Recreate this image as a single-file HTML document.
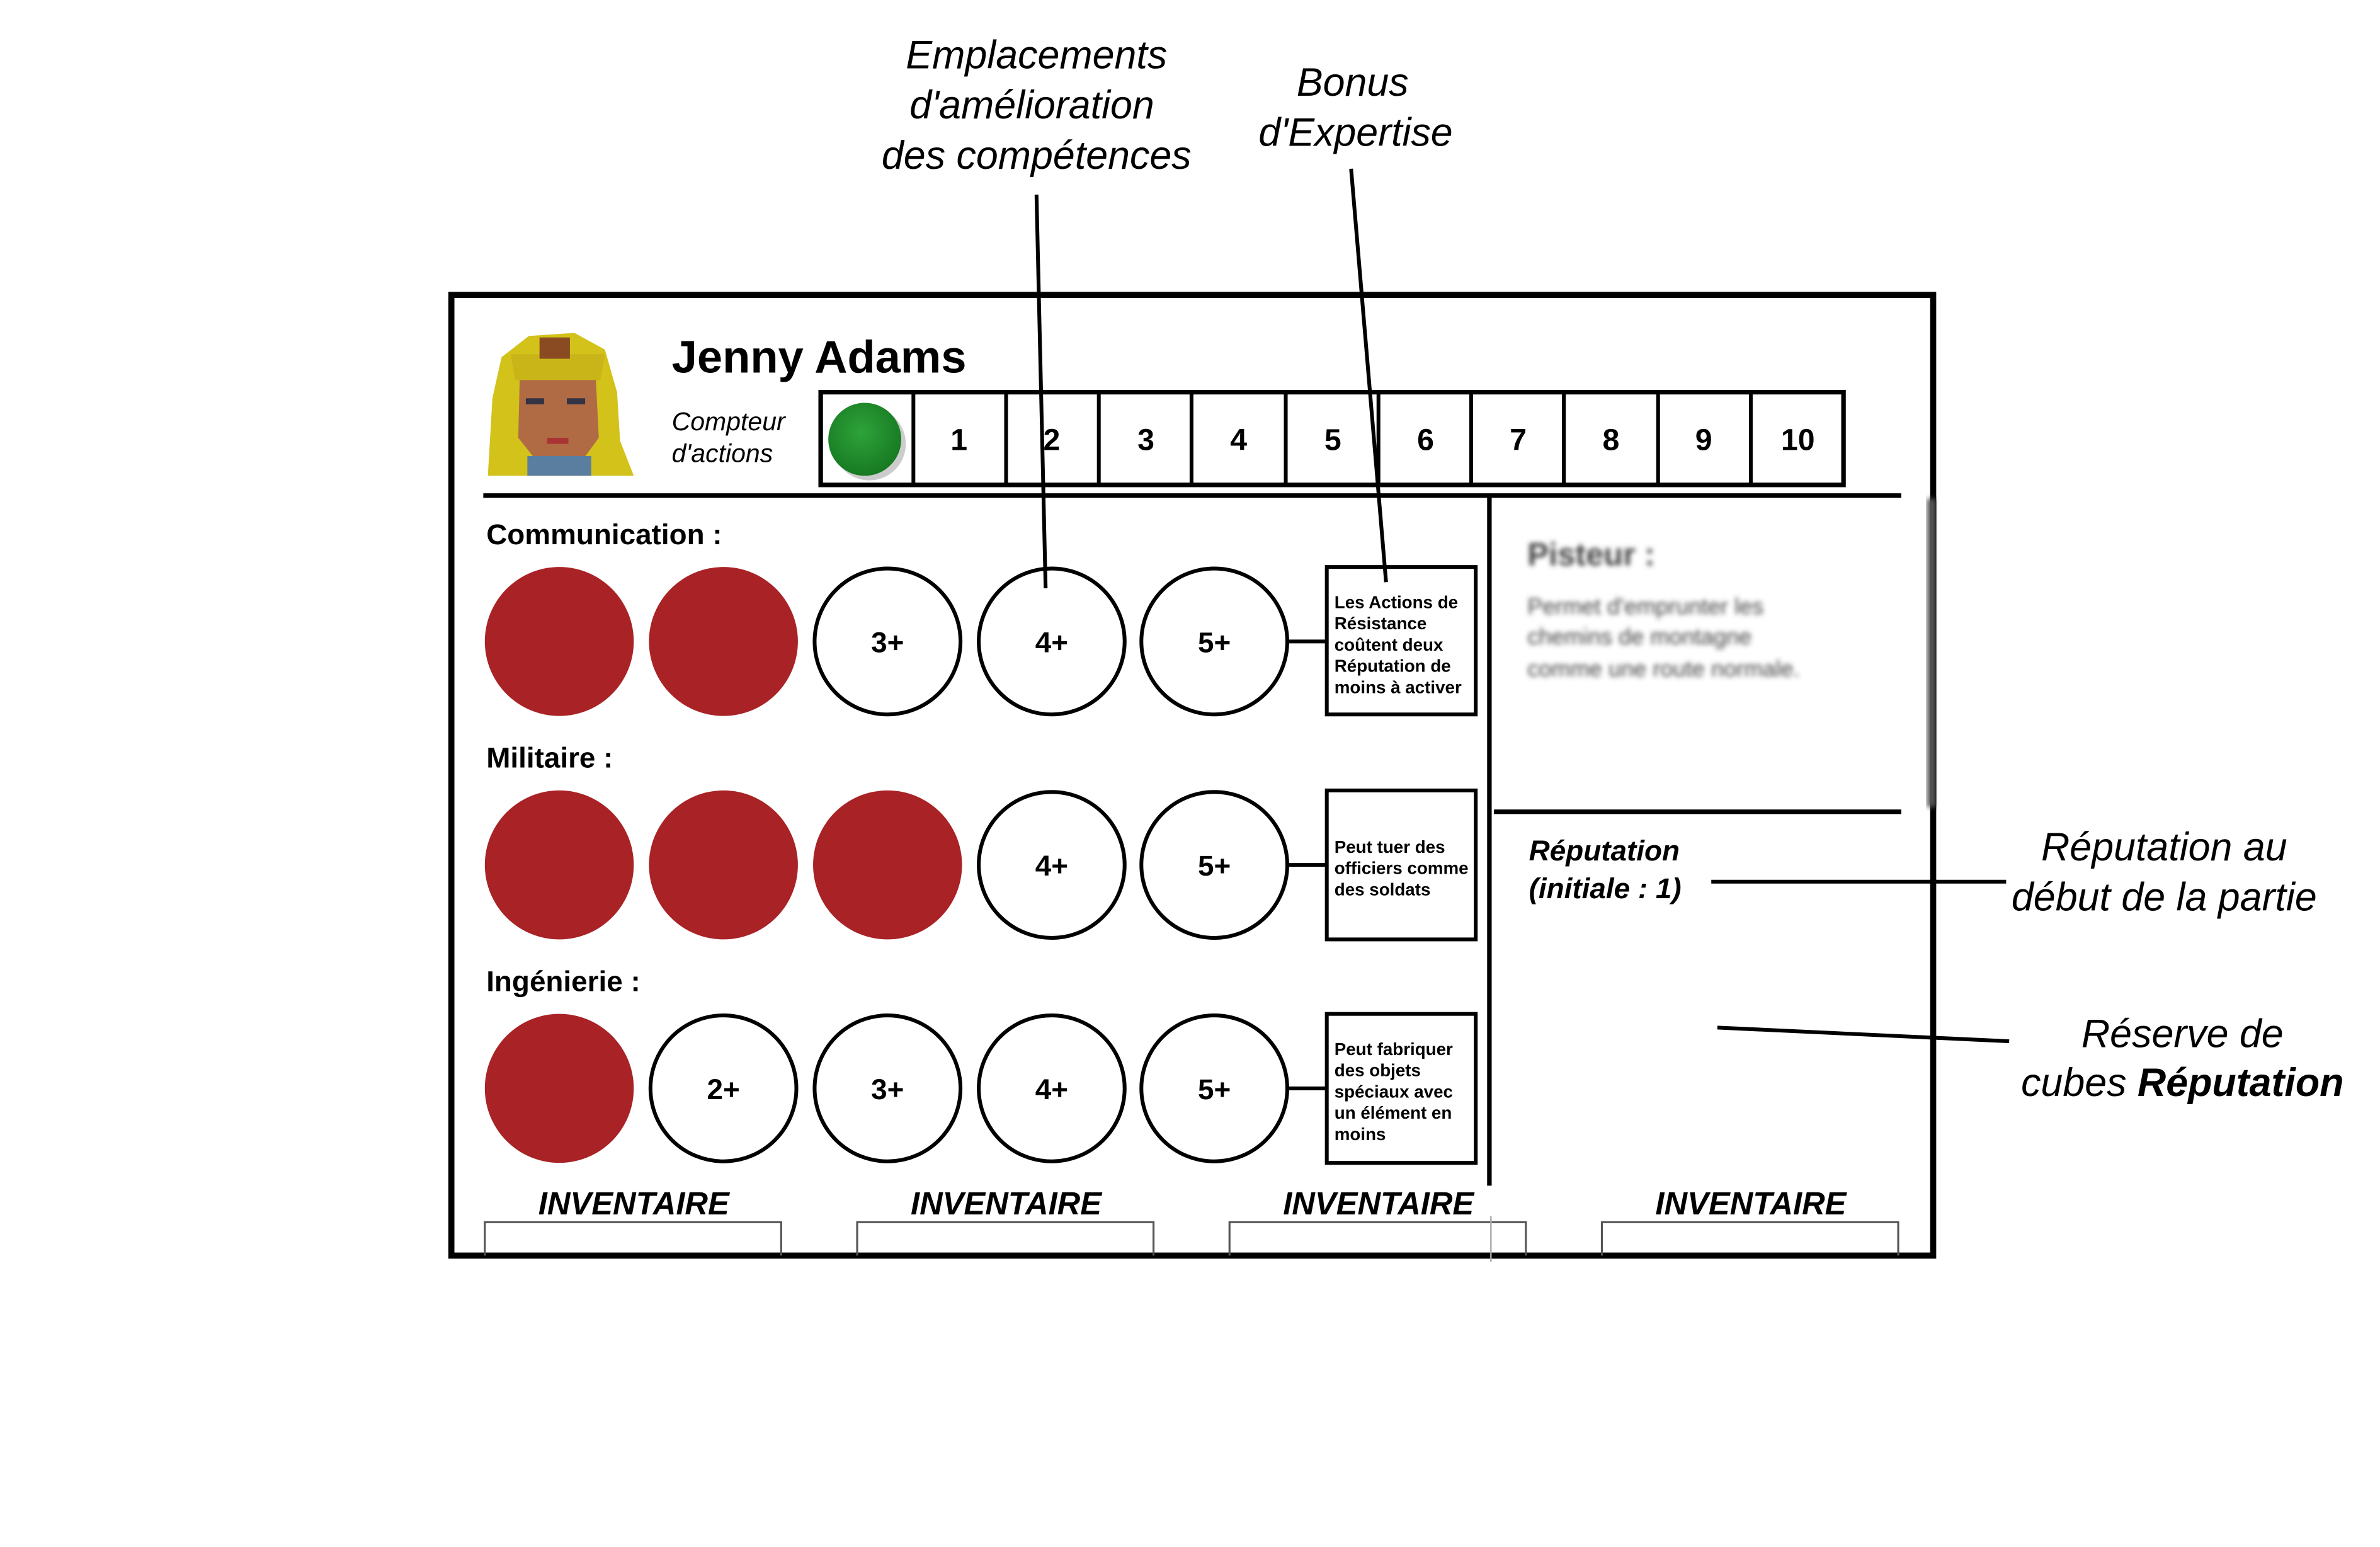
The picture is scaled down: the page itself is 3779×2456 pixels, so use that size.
<!DOCTYPE html>
<html><head><meta charset="utf-8"><style>
html,body{margin:0;padding:0;background:#fff;width:3779px;height:2456px;overflow:hidden}
svg{display:block}
text{font-family:"Liberation Sans",sans-serif}
</style></head><body>
<svg width="3779" height="2456" viewBox="0 0 1566 1017.7" preserveAspectRatio="none" xmlns="http://www.w3.org/2000/svg">
<defs>
<filter id="bl" x="-10%" y="-10%" width="120%" height="120%"><feGaussianBlur stdDeviation="1.6"/></filter>
<radialGradient id="gr" cx="45%" cy="40%" r="60%"><stop offset="0" stop-color="#2ea33a"/><stop offset="1" stop-color="#177a22"/></radialGradient>
</defs>
<rect width="1566" height="1018" fill="#fff"/>
<g font-style="italic" font-size="26" text-anchor="middle" fill="#000">
<text x="682" y="45">Emplacements</text>
<text x="679" y="78">d'amélioration</text>
<text x="682" y="111">des compétences</text>
<text x="890" y="63">Bonus</text>
<text x="892" y="96">d'Expertise</text>
<text x="1424" y="566">Réputation au</text>
<text x="1424" y="599">début de la partie</text>
<text x="1436" y="689">Réserve de</text>
<text x="1436" y="721">cubes <tspan font-weight="bold">Réputation</tspan></text>
</g>
<rect x="297" y="194" width="975" height="632" fill="none" stroke="#000" stroke-width="4"/>
<g>
<path d="M321 313 L324 262 L330 235 L348 221 L378 219 L398 230 L406 258 L408 290 L417 313 Z" fill="#d2c21a"/>
<path d="M342 248 L392 248 L394 288 L383 303 L353 303 L341 288 Z" fill="#b06b45"/>
<rect x="346" y="262" width="12" height="4" fill="#334"/><rect x="373" y="262" width="12" height="4" fill="#334"/>
<rect x="360" y="288" width="14" height="4" fill="#a33"/>
<path d="M336 233 L398 233 L395 250 L339 250 Z" fill="#c9b518"/>
<rect x="347" y="300" width="42" height="13" fill="#5a7ea0"/>
<rect x="355" y="222" width="20" height="14" fill="#8a4a22"/>
</g>
<text x="442" y="245" font-size="30" font-weight="bold">Jenny Adams</text>
<text x="442" y="283" font-size="17" font-style="italic">Compteur</text>
<text x="442" y="304" font-size="17" font-style="italic">d'actions</text>
<rect x="540" y="258" width="673" height="61" fill="none" stroke="#000" stroke-width="3"/>
<g stroke="#000" stroke-width="2.5">
<line x1="601" y1="258" x2="601" y2="319"/><line x1="662" y1="258" x2="662" y2="319"/><line x1="723" y1="258" x2="723" y2="319"/><line x1="784" y1="258" x2="784" y2="319"/><line x1="846" y1="258" x2="846" y2="319"/><line x1="907" y1="258" x2="907" y2="319"/><line x1="968" y1="258" x2="968" y2="319"/><line x1="1029" y1="258" x2="1029" y2="319"/><line x1="1091" y1="258" x2="1091" y2="319"/><line x1="1152" y1="258" x2="1152" y2="319"/>
</g>
<ellipse cx="572" cy="292" rx="24" ry="24" fill="#999" opacity=".5"/>
<circle cx="569" cy="289" r="24" fill="url(#gr)"/>
<g font-size="20" font-weight="bold" text-anchor="middle">
<text x="631" y="296">1</text><text x="692" y="296">2</text><text x="754" y="296">3</text><text x="815" y="296">4</text><text x="877" y="296">5</text><text x="938" y="296">6</text><text x="999" y="296">7</text><text x="1060" y="296">8</text><text x="1121" y="296">9</text><text x="1183" y="296">10</text>
</g>
<line x1="318" y1="326" x2="1251" y2="326" stroke="#000" stroke-width="3"/>
<line x1="980" y1="326" x2="980" y2="780" stroke="#000" stroke-width="3"/>
<rect x="1268" y="328" width="6" height="203" fill="#555" filter="url(#bl)"/>
<g filter="url(#bl)" fill="#444">
<text x="1005" y="372" font-size="21" font-weight="bold">Pisteur :</text>
<text x="1005" y="404" font-size="15">Permet d'emprunter les</text>
<text x="1005" y="424" font-size="15">chemins de montagne</text>
<text x="1005" y="445" font-size="15">comme une route normale.</text>
</g>
<line x1="983" y1="534" x2="1251" y2="534" stroke="#000" stroke-width="3"/>
<text x="1006" y="566" font-size="19" font-weight="bold" font-style="italic">Réputation</text>
<text x="1006" y="591" font-size="19" font-weight="bold" font-style="italic">(initiale : 1)</text>
<g font-size="19" font-weight="bold">
<text x="320" y="358">Communication :</text>
<text x="320" y="505">Militaire :</text>
<text x="320" y="652">Ingénierie :</text>
</g>
<g fill="#a82226">
<circle cx="368" cy="422" r="49"/><circle cx="476" cy="422" r="49"/>
<circle cx="368" cy="569" r="49"/><circle cx="476" cy="569" r="49"/><circle cx="584" cy="569" r="49"/>
<circle cx="368" cy="716" r="49"/>
</g>
<g fill="#fff" stroke="#000" stroke-width="2.5">
<circle cx="584" cy="422" r="48"/><circle cx="692" cy="422" r="48"/><circle cx="799" cy="422" r="48"/>
<circle cx="692" cy="569" r="48"/><circle cx="799" cy="569" r="48"/>
<circle cx="476" cy="716" r="48"/><circle cx="584" cy="716" r="48"/><circle cx="692" cy="716" r="48"/><circle cx="799" cy="716" r="48"/>
<line x1="848" y1="422" x2="873" y2="422"/><line x1="848" y1="569" x2="873" y2="569"/><line x1="848" y1="716" x2="873" y2="716"/>
<rect x="873" y="373" width="98" height="97"/><rect x="873" y="520" width="98" height="98"/><rect x="873" y="667" width="98" height="98"/>
</g>
<g font-size="19" font-weight="bold" text-anchor="middle">
<text x="584" y="429">3+</text><text x="692" y="429">4+</text><text x="799" y="429">5+</text>
<text x="692" y="576">4+</text><text x="799" y="576">5+</text>
<text x="476" y="723">2+</text><text x="584" y="723">3+</text><text x="692" y="723">4+</text><text x="799" y="723">5+</text>
</g>
<g font-size="11.5" font-weight="bold">
<text x="878" y="400">Les Actions de</text><text x="878" y="414">Résistance</text><text x="878" y="428">coûtent deux</text><text x="878" y="442">Réputation de</text><text x="878" y="456">moins à activer</text>
<text x="878" y="561">Peut tuer des</text><text x="878" y="575">officiers comme</text><text x="878" y="589">des soldats</text>
<text x="878" y="694">Peut fabriquer</text><text x="878" y="708">des objets</text><text x="878" y="722">spéciaux avec</text><text x="878" y="736">un élément en</text><text x="878" y="750">moins</text>
</g>
<g font-size="21" font-weight="bold" font-style="italic" text-anchor="middle">
<text x="417" y="799">INVENTAIRE</text><text x="662" y="799">INVENTAIRE</text><text x="907" y="799">INVENTAIRE</text><text x="1152" y="799">INVENTAIRE</text>
</g>
<g fill="none" stroke="#555" stroke-width="1.3">
<path d="M319 826 V804 H514 V826"/><path d="M564 826 V804 H759 V826"/><path d="M809 826 V804 H1004 V826"/><path d="M1054 826 V804 H1249 V826"/>
</g>
<line x1="981" y1="800" x2="981" y2="830" stroke="#aaa" stroke-width="1"/>
<g stroke="#000" stroke-width="2.5" fill="none">
<line x1="682" y1="128" x2="688" y2="387"/>
<line x1="889" y1="111" x2="912" y2="383"/>
<line x1="1126" y1="580" x2="1320" y2="580"/>
<line x1="1130" y1="676" x2="1322" y2="685"/>
</g>
</svg>
</body></html>
